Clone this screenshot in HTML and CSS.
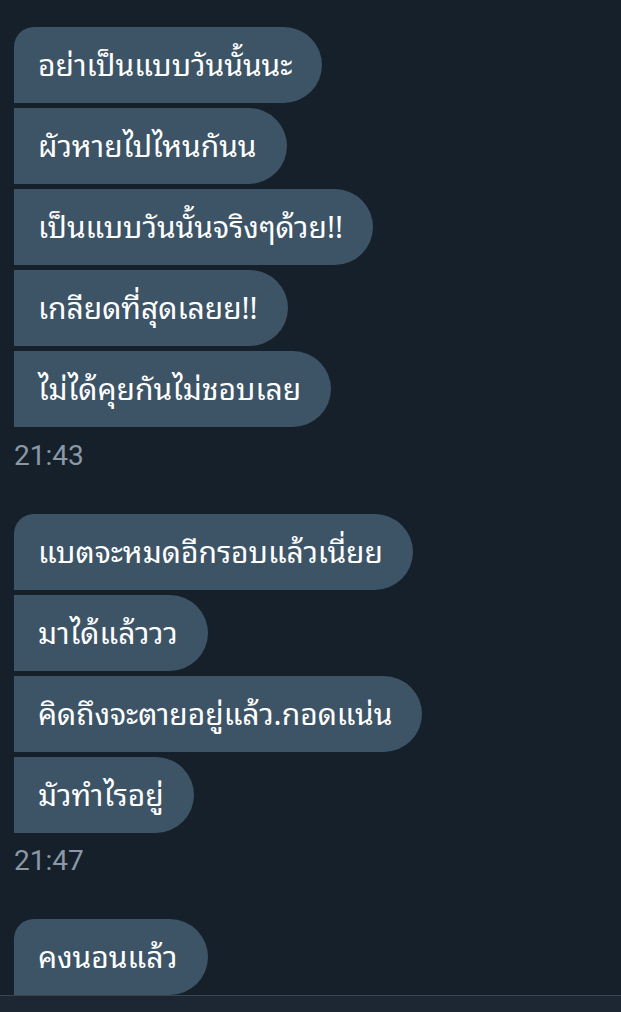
FILE: index.html
```html
<!DOCTYPE html>
<html lang="th">
<head>
<meta charset="utf-8">
<link rel="stylesheet" href="styles.css">
</head>
<body>
<main class="chat">
  <section class="group">
    <div class="bubble lead">อย่าเป็นแบบวันนั้นนะ</div>
    <div class="bubble">ผัวหายไปไหนกันน</div>
    <div class="bubble">เป็นแบบวันนั้นจริงๆด้วย!!</div>
    <div class="bubble">เกลียดที่สุดเลยย!!</div>
    <div class="bubble">ไม่ได้คุยกันไม่ชอบเลย</div>
    <div class="time">21:43</div>
  </section>
  <section class="group">
    <div class="bubble lead">แบตจะหมดอีกรอบแล้วเนี่ยย</div>
    <div class="bubble">มาได้แล้ววว</div>
    <div class="bubble">คิดถึงจะตายอยู่แล้ว.กอดแน่น</div>
    <div class="bubble">มัวทำไรอยู่</div>
    <div class="time t2">21:47</div>
  </section>
  <section class="group">
    <div class="bubble lead">คงนอนแล้ว</div>
  </section>
</main>
<footer class="composer"></footer>
</body>
</html>
```
FILE: styles.css
```css
html, body {
  margin: 0;
  padding: 0;
  background: #15202b;
  height: 1012px;
  overflow: hidden;
}
body {
  display: flex;
  flex-direction: column;
  font-family: "Noto Sans Thai Looped", "Loma", "Noto Sans", sans-serif;
}
.chat {
  flex: 1;
  overflow: hidden;
  padding: 27px 0 0 14px;
  display: flex;
  flex-direction: column;
}
.group {
  display: flex;
  flex-direction: column;
  align-items: flex-start;
  gap: 5px;
  margin-bottom: 38px;
}
.bubble {
  height: 76px;
  box-sizing: border-box;
  display: flex;
  align-items: center;
  padding: 0 30px 6px 24px;
  background: #3d5466;
  color: #ffffff;
  font-size: 30px;
  border-radius: 0 38px 38px 0;
  white-space: nowrap;
}
.bubble.lead {
  border-top-left-radius: 20px;
}
.time {
  font-family: Roboto, "Liberation Sans", sans-serif;
  font-size: 28px;
  line-height: 40px;
  color: #8b98a5;
  margin-top: 4px;
}
.t2 {
  margin-top: 3px;
}
.composer {
  height: 16px;
  flex: none;
  background: #1c2733;
  border-top: 1px solid #3a4550;
}
```
